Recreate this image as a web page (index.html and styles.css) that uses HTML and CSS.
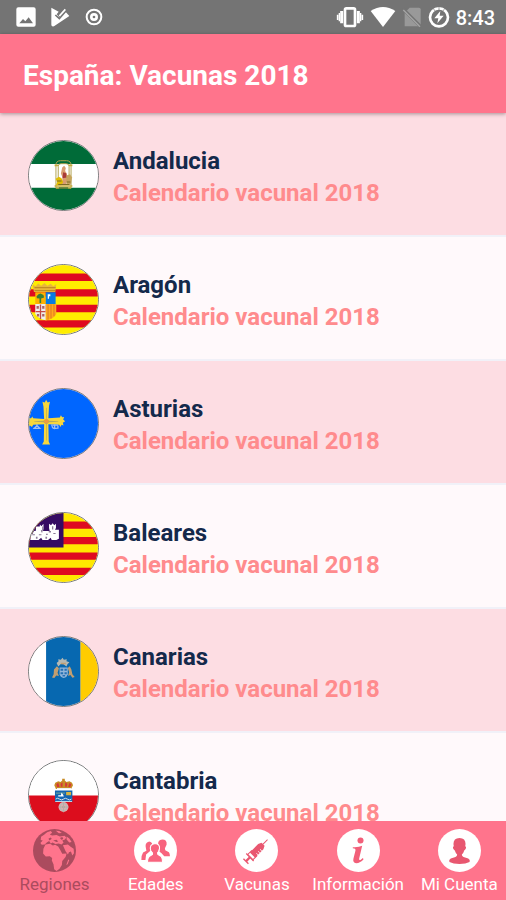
FILE: index.html
```html
<!DOCTYPE html>
<html lang="es">
<head>
<meta charset="utf-8">
<meta name="viewport" content="width=device-width, initial-scale=1">
<title>España: Vacunas 2018</title>
<link rel="stylesheet" href="styles.css">
</head>
<body>
<div class="status">
  <div class="status-group status-left">
    <svg width="20" height="20" viewBox="0 0 60 60"><path fill="#fff" fill-rule="evenodd" d="M7 1h46q6 0 6 6v46q0 6-6 6H7q-6 0-6-6V7q0-6 6-6zM10 49h41L38 31 28 43l-7-7z"/></svg>
    <svg width="20" height="20" viewBox="0 0 60 60"><path fill="#fff" d="M4 2l22 12-6 8 8 9 17-18 13 14L12 58q-8 2-8-5z"/><path d="M16 24l12 11 20-23" fill="none" stroke="#747474" stroke-width="5"/><path d="M28 27L46 7" stroke="#fff" stroke-width="5"/></svg>
    <svg width="20" height="20" viewBox="0 0 60 60"><circle cx="30" cy="30" r="22" fill="none" stroke="#fff" stroke-width="6"/><circle cx="30" cy="30" r="8" fill="none" stroke="#fff" stroke-width="8"/></svg>
  </div>
  <div class="status-group status-right">
    <svg width="28" height="22" viewBox="0 0 84 66"><rect x="27" y="7" width="30" height="53" rx="4" fill="none" stroke="#fff" stroke-width="8"/><path d="M17 15v37M67 15v37" stroke="#fff" stroke-width="9"/><path d="M5 26v16M79 26v16" stroke="#fff" stroke-width="5"/><path d="M10 21v25M74 21v25" stroke="#fff" stroke-width="4"/></svg>
    <svg width="26" height="22" viewBox="0 0 78 66"><path d="M2 15Q39-9 76 15L39 63z" fill="#fff"/></svg>
    <svg width="20" height="22" viewBox="0 0 60 66"><path d="M23 5h28q5 0 5 5v51H8V20z" fill="#999"/><path d="M2 8l54 54" stroke="#747474" stroke-width="10"/><path d="M4 12l50 50" stroke="#a5a5a5" stroke-width="4"/></svg>
    <svg width="22" height="22" viewBox="0 0 66 66"><circle cx="33" cy="34" r="27" fill="none" stroke="#fff" stroke-width="8"/><path d="M33 1v14M16 8l6 8M50 8l-6 8" stroke="#747474" stroke-width="2"/><path d="M37 15L19 37h12l-3 15 19-23H35z" fill="#fff"/></svg>
    <span class="clock">8:43</span>
  </div>
</div>
<header class="appbar"><h1>España: Vacunas 2018</h1></header>
<main class="list">
  <a class="row" href="#andalucia">
    <svg class="flag" viewBox="27 33 210 210"><path fill="#fff" d="M27 33h210v210H27z"/><path fill="#006b38" d="M27 33h210v70H27zM27 175h210v70H27z"/>
      <g fill="none" stroke="#b2a451" stroke-width="3"><path d="M109 177v-70q0-14 14-14h18q14 0 14 14v70M116 166v-56q0-8 8-8h16q9 0 9 8v56"/></g>
      <path d="M105 107h11M148 107h11M105 170h54M109 176h46" stroke="#c5aa3c" stroke-width="5"/>
      <path fill="#d99d70" d="M128 114l6-6 5 7-2 9 5 8 3 18-6 16h-12l2-22-5-12z"/><path fill="#a83a3a" d="M131 128l9 3 2 13-13 2z"/>
      <path fill="#e1bd00" d="M108 148l10-6 8 4 5 12-6 10h-16l4-10z"/><path fill="#c6a45c" d="M141 138l11-4 6 10-4 22h-13z"/><path fill="#7f6b28" d="M112 153h14v3h-14zM142 156h11v3h-11zM116 164h34v3h-34z"/><path fill="#557d37" d="M118 174h28v5h-28z"/></svg>
    <span class="text"><strong>Andalucia</strong><span class="sub">Calendario vacunal 2018</span></span>
  </a>
  <a class="row" href="#aragon">
    <svg class="flag" viewBox="27 27 210 210"><path fill="#ffed00" d="M27 27h210v210H27z"/><path fill="#df0a20" d="M27 53h210v23H27zM27 101h210v22H27zM27 148h210v23H27zM27 195h210v22H27z"/>
      <path fill="#e8b73a" d="M38 86l9 6 8-9 9 7 10-8 9 8 10-6 8 8 9-7-3 24H42z"/><path stroke="#b98220" stroke-width="3" d="M44 96h64M44 105h64"/>
      <path fill="#ffb000" d="M46 110h32v36H46z"/><path fill="#087be0" d="M78 110h30v36H78z"/><path fill="#eee" d="M46 146h32v49q-24-5-32-19z"/><path fill="#ffaa1b" d="M78 146h32v30q-6 14-32 20z"/>
      <path fill="#397f36" d="M50 122l6-6 6-2 9 4 2 8-9 3v14h-5v-14l-8-1z"/><path fill="#fff" d="M84 116h8v6h-4v8h-4z"/><path stroke="#c74b47" stroke-width="4" d="M62 147v45M47 169h30"/><path fill="#aa6265" d="M50 152h7v8h-7zM67 152h7v8h-7zM51 176h7v8h-7zM67 176h7v8h-7z"/><path stroke="#e07627" stroke-width="3" d="M85 147v46M94 147v43M103 147v36"/></svg>
    <span class="text"><strong>Aragón</strong><span class="sub">Calendario vacunal 2018</span></span>
  </a>
  <a class="row" href="#asturias">
    <svg class="flag" viewBox="27 27 210 210"><path fill="#0066ff" d="M27 27h210v210H27z"/>
      <path fill="#f8d73c" d="M68 66l7 2 4-8 5 8 7-2-3 12-2 38 35-2 3-7 4 6 6-1-3 8 6 5-7 5 2 8-6-2-3 7-4-7-33-2 1 53 4 9H67l5-9 1-53-33 2-4 7-6-5-4 4V113l7 4 4-6 3 5 33 2-2-38z"/>
      <path fill="#b8a95a" d="M79 84h2v34l7 6 28 1v2l-28 1-7 6v50h-2v-50l-8-6-28-1v-2l28-1 8-6z"/><circle cx="80" cy="125" r="7" fill="#ef9b42"/>
      <path fill="none" stroke="#9bbdf5" stroke-width="4" d="M51 134v5l-8 8h17l-8-8M40 147h9M94 137h21M105 134v12M97 140q2 8 10 7l8-1v-8"/></svg>
    <span class="text"><strong>Asturias</strong><span class="sub">Calendario vacunal 2018</span></span>
  </a>
  <a class="row" href="#baleares">
    <svg class="flag" viewBox="27 27 210 210"><path fill="#ffe800" d="M27 27h210v210H27z"/><path fill="#df0a20" d="M27 53h210v22H27zM27 100h210v22H27zM27 147h210v22H27zM27 194h210v22H27z"/><path fill="#350b62" d="M27 27h105v105H27z"/>
      <path fill="#fff" d="M31 107V86l6 6 5-10 6-1V68h12v-6l5 5 6-7v15l-2 7h21l-2-9V60l6 4 5-6 5 6 5-4v13l-3 5h12v27l-8 4H96l-3-7-8 7H68l-4-7-8 7H31z"/><path fill="#8c7c98" d="M67 68h4v12h-4zM97 67h4v10h-4zM37 92h8v3h-8zM57 92h8v3h-8zM79 90h5v4h-5zM101 88h7v3h-7zM63 80l5-3v9h-3zM87 82h7v4h-7zM48 99h5v6h-5zM77 99h5v6h-5z"/></svg>
    <span class="text"><strong>Baleares</strong><span class="sub">Calendario vacunal 2018</span></span>
  </a>
  <a class="row" href="#canarias">
    <svg class="flag" viewBox="27 31 210 210"><path fill="#fff" d="M27 31h52v210H27z"/><path fill="#0768b0" d="M79 31h105v210H79z"/><path fill="#fc0" d="M184 31h53v210h-53z"/>
      <path fill="#b5b8b2" d="M111 110l6-5-1-6 8 1 5-6 4 6 9-1-1 6 9 3-6 6-3 7-9-7-8-1-8 8z"/><path fill="#c29e70" d="M112 120l6 6-4 14 4 10-8-2-6 8-7-2 5-10 1-14zM151 120l5 10 3 14 7 9-7 2-6-8-7 3 3-12-4-13zM124 109h15v5h-15z"/>
      <path fill="#91b5da" d="M120 124h25v20q-2 9-12 12-11-3-13-12z"/><path fill="#2570b4" d="M123 128h8v6h-8zM135 128h7v6h-7zM123 138h8v6h-8zM135 138h7v6h-7zM129 147h8v4h-8z"/></svg>
    <span class="text"><strong>Canarias</strong><span class="sub">Calendario vacunal 2018</span></span>
  </a>
  <a class="row" href="#cantabria">
    <svg class="flag" viewBox="27 30 210 210"><path fill="#fff" d="M27 30h210v105H27z"/><path fill="#dc0d1d" d="M27 135h210v105H27z"/>
      <path fill="#c88b24" d="M109 115l-5-11 3-8 9-4 7 2 5-5v-5h8v5l5 5 9-2 8 4 3 8-6 11z"/><path fill="#d53638" d="M110 101l6-5 4 12-7 2zM123 99l6-4v13h-5zM137 95l7 4-2 9h-5zM150 97l6 4-4 9-6-2z"/><path fill="#eee" d="M112 112h43v3h-43z"/>
      <path fill="#1466b1" d="M106 120h53v35h-53z"/><path fill="#d5b342" d="M140 124h15v10h-15z"/><path fill="#649a9a" d="M109 126h27v4h-27z"/><path fill="#fff" d="M116 134h8l2-8 5 7 2 5h-17z"/><path fill="none" stroke="#d9e1e9" stroke-width="3" d="M108 146q6-5 12 0t12 0 12 0 12 0M107 153h51"/>
      <circle cx="132" cy="170" r="15" fill="#dfaeb0"/><circle cx="132" cy="170" r="10" fill="none" stroke="#b9b9b6" stroke-width="4"/><circle cx="132" cy="170" r="4" fill="#a39d96"/><path stroke="#b5aea8" stroke-width="3" d="M132 155v31M117 170h30"/></svg>
    <span class="text"><strong>Cantabria</strong><span class="sub">Calendario vacunal 2018</span></span>
  </a>
</main>
<nav class="tabs">
  <button class="tab active" type="button">
    <svg viewBox="101 43 128 128"><circle cx="165" cy="107" r="64" fill="#ab4b5e"/><path fill="#ff748c" d="M125 66l9-6 9-7 11-4 4 5-7 5 7 3 13-1 10 4 14-2 5 5-4 6-8 3 4 6-6 6-9-3-9 2-9-5-5 3-5-7-7 4-6 6-9 1-4-5 7-8-6-1zM138 89l14-2 8 5 7-2 9 5 7 12 5 10 13-1-3 10-10 12-1 12-7 11-9 7-7-5-2-15-5-11 1-8-7-5-12 1-8-9 1-14zM190 91l15-2 8 7 9 6 1 13-5 7-4-12-6 2-3 7-7-10zM206 134l3 1-5 13-4 2zM169 48l10 1 8 6-9 1zM201 65l8 6 7 11-7 1-8-9z"/><path fill="#ab4b5e" d="M147 72l6-4 4 4-7 5zM161 77l10-2 5 5-5 2zM181 70l7-3 3 4-4 5z"/></svg>
    <span>Regiones</span>
  </button>
  <button class="tab" type="button">
    <svg viewBox="404 43 128 128"><circle cx="468" cy="107" r="64" fill="#fff"/><g fill="#f8637e"><path d="M449 80q11 2 10 14-4 5-6 14l-13 11-2 16h-12q0-15 5-22l10-5-1-5q-6-19 9-23zM488 74q15 0 13 16l-5 10 1 6 11 6q4 7 3 12h-17l-8-9-6-4 1-16-5-5q-2-15 12-16z"/><path stroke="#fff" stroke-width="3" d="M467 86q14 1 13 15l-3 9-3 4 1 5 10 6q4 6 4 17h-45q0-12 5-17l10-6v-5l-5-6q-6-20 13-22z"/></g></svg>
    <span>Edades</span>
  </button>
  <button class="tab" type="button">
    <svg viewBox="109 43 128 128"><circle cx="173" cy="107" r="64" fill="#fff"/><g transform="rotate(45 173 107)" fill="#e95770"><path d="M172 61h3v21h-3zM167 80h13l5 10v35h-22V90z"/><path d="M163 118h22v16h-22z" fill="none" stroke="#e95770" stroke-width="3"/><path d="M158 133h31v4h-31zM170 136h7v16h-7zM163 150h21v4h-21z"/><path d="M178 96h7v2h-7zM178 104h7v2h-7zM178 112h7v2h-7z" fill="#fff"/></g></svg>
    <span>Vacunas</span>
  </button>
  <button class="tab" type="button">
    <svg viewBox="412 43 128 128"><circle cx="476" cy="107" r="64" fill="#fff"/><g fill="#f25f79"><circle cx="482" cy="77" r="9"/><path d="M459 97q18 1 28-4l-9 38q-1 6 4 4l7-6 2 4q-9 11-22 12-11-1-8-14l6-24q1-7-8-7z"/></g></svg>
    <span>Información</span>
  </button>
  <button class="tab" type="button">
    <svg viewBox="715 43 128 128"><circle cx="779" cy="107" r="64" fill="#fff"/><path fill="#e85770" d="M779 70q18 0 18 18l-1 6q5 3 0 10l-3 3q-2 8-7 12 0 6 5 7l14 5q7 4 4 10-11 6-30 6t-30-6q-3-6 4-10l14-5q5-2 5-7-5-5-7-12l-3-3q-5-7 0-10l-1-6q0-18 18-18z"/></svg>
    <span>Mi Cuenta</span>
  </button>
</nav>
</body>
</html>
```

FILE: styles.css
```css
* {
  box-sizing: border-box;
}

body {
  margin: 0;
  height: 100vh;
  display: flex;
  flex-direction: column;
  overflow: hidden;
  font-family: Roboto, "Liberation Sans", sans-serif;
  background: #fff9fb;
}

svg {
  display: block;
  flex: none;
}

.status {
  flex: none;
  height: 34px;
  padding: 0 11px 0 16px;
  display: flex;
  align-items: center;
  justify-content: space-between;
  background: #747474;
  color: #fff;
}

.status-group {
  display: flex;
  align-items: center;
}

.status-left {
  gap: 14px;
}

.status-right {
  gap: 6px;
}

.clock {
  padding-top: 2px;
  font-size: 20px;
  font-weight: 500;
  line-height: 24px;
}

.appbar {
  flex: none;
  height: 79px;
  padding: 0 23px;
  display: flex;
  align-items: center;
  position: relative;
  background: #ff748c;
  box-shadow: 0 1px 4px rgba(0, 0, 0, 0.35);
  color: #fff;
}

.appbar h1 {
  margin: 0;
  padding-top: 4px;
  font-size: 28px;
  line-height: 36px;
  font-weight: 700;
}

.list {
  flex: 1;
  min-height: 0;
  overflow: hidden;
}

.row {
  height: 124px;
  padding: 3px 28px 0;
  display: flex;
  align-items: center;
  gap: 14px;
  border-bottom: 2px solid #f1f1f8;
  color: #14294b;
  text-decoration: none;
}

.row:nth-child(odd) {
  background: #fddde3;
}

.flag {
  width: 71px;
  height: 71px;
  border: 1px solid #777c7c;
  border-radius: 50%;
}

.text {
  padding-top: 2px;
  display: flex;
  flex-direction: column;
  font-size: 24px;
  line-height: 32px;
  font-weight: 700;
}

.text strong {
  font-weight: 700;
}

.sub {
  color: #ff8b8d;
}

.tabs {
  flex: none;
  height: 79px;
  padding-left: 4px;
  display: flex;
  overflow: hidden;
  background: #ff748c;
}

.tab {
  flex: 0 0 20vw;
  padding: 8px 0 0;
  border: 0;
  display: flex;
  flex-direction: column;
  align-items: center;
  gap: 2px;
  background: none;
  color: #fff;
  font: 400 17px/20px Roboto, "Liberation Sans", sans-serif;
  white-space: nowrap;
}

.tab svg {
  width: 43px;
  height: 43px;
}

.tab.active {
  color: #ab4b5e;
}
```
